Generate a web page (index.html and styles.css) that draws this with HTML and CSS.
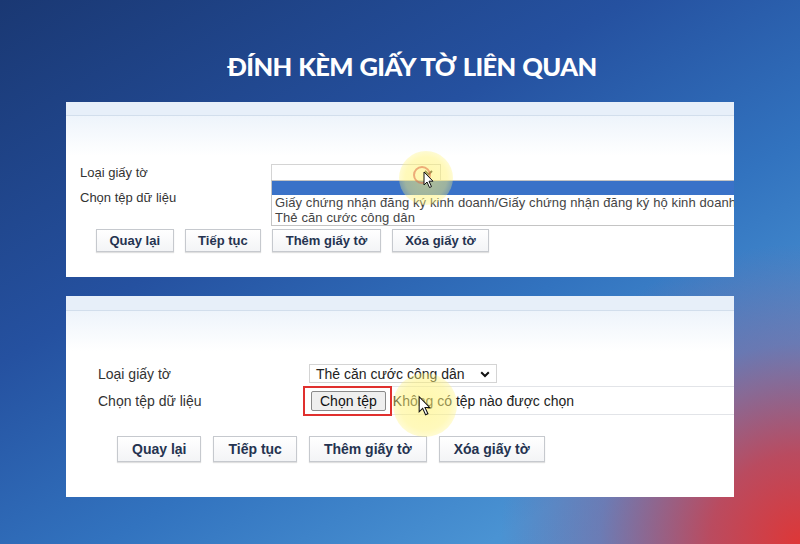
FILE: index.html
```html
<!DOCTYPE html>
<html lang="vi">
<head>
    <meta charset="UTF-8">
    <meta name="viewport" content="width=device-width, initial-scale=1.0">
    <title>Đính kèm giấy tờ liên quan</title>
    <link rel="stylesheet" href="styles.css">
</head>
<body>
    <h1 class="title">ĐÍNH KÈM GIẤY TỜ LIÊN QUAN</h1>

    <div class="shots">
        <!-- step 1: dropdown opened -->
        <div class="panel panel-sm">
            <div class="band"></div>
            <div class="form">
                <div class="form-row">
                    <span class="label">Loại giấy tờ</span>
                    <div class="select select-empty">
                        <svg class="chevron" width="9" height="6" viewBox="0 0 9 6"><path d="M1 1 L4.5 4.5 L8 1" fill="none" stroke="#222" stroke-width="1.8"/></svg>
                        <div class="dropdown">
                            <div class="option option-active"></div>
                            <div class="option">Giấy chứng nhận đăng ký kinh doanh/Giấy chứng nhận đăng ký hộ kinh doanh</div>
                            <div class="option">Thẻ căn cước công dân</div>
                        </div>
                    </div>
                </div>
                <div class="form-row">
                    <span class="label">Chọn tệp dữ liệu</span>
                    <span></span>
                </div>
                <div class="actions">
                    <button>Quay lại</button>
                    <button>Tiếp tục</button>
                    <button>Thêm giấy tờ</button>
                    <button>Xóa giấy tờ</button>
                </div>
            </div>
            <div class="glow glow-1"></div>
            <div class="click-ring"></div>
            <svg class="cursor cursor-1" width="12" height="18" viewBox="0 0 12 18"><path d="M1 1 L1 14 L4 11 L6.5 16.5 L8.5 15.6 L6 10.2 L10 10.2 Z" fill="#fff" stroke="#111" stroke-width="1"/></svg>
        </div>

        <!-- step 2: file chooser -->
        <div class="panel panel-lg">
            <div class="band"></div>
            <div class="form">
                <div class="form-row">
                    <span class="label">Loại giấy tờ</span>
                    <div class="select">
                        <span>Thẻ căn cước công dân</span>
                        <svg class="chevron" width="10" height="7" viewBox="0 0 10 7"><path d="M1.2 1.2 L5 5 L8.8 1.2" fill="none" stroke="#111" stroke-width="2"/></svg>
                    </div>
                </div>
                <div class="form-row">
                    <span class="label">Chọn tệp dữ liệu</span>
                    <div class="file-cell">
                        <span class="highlight"><span class="file-btn">Chọn tệp</span></span>
                        <span class="file-name">Không có tệp nào được chọn</span>
                    </div>
                </div>
                <div class="actions">
                    <button>Quay lại</button>
                    <button>Tiếp tục</button>
                    <button>Thêm giấy tờ</button>
                    <button>Xóa giấy tờ</button>
                </div>
            </div>
            <div class="glow glow-2"></div>
            <svg class="cursor cursor-2" width="14" height="22" viewBox="0 0 12 18"><path d="M1 1 L1 14 L4 11 L6.5 16.5 L8.5 15.6 L6 10.2 L10 10.2 Z" fill="#fff" stroke="#111" stroke-width="0.9"/></svg>
        </div>
    </div>
</body>
</html>
```

FILE: styles.css
```css
body { margin: 0; width: 800px; height: 544px; overflow: hidden; font-family: "Liberation Sans", Arial, sans-serif; background: radial-gradient(circle at 100% 100%, rgba(222, 55, 55, 1) 0, rgba(205, 62, 75, 0.85) 90px, rgba(140, 100, 150, 0.5) 200px, rgba(100, 130, 190, 0) 300px), linear-gradient(150deg, #1a3873 0%, #2551a0 36%, #3273bf 60%, #4a93d3 82%, #4d96d5 100%); }
.title { margin: 0; padding: 51px 0 0 24px; height: 30px; line-height: 30px; text-align: center; color: #fff; font-family: Lato, "Noto Sans", sans-serif; font-weight: 900; font-size: 25.5px; letter-spacing: -0.6px; word-spacing: 1px; }
.shots { display: flex; flex-direction: column; gap: 19px; padding: 21px 66px 0; }
.panel { position: relative; overflow: hidden; background: #fff; }
.panel-sm { height: 175px; }
.panel-lg { height: 201px; }
.band { height: 13px; background: #e7eff9; border-bottom: 1px solid #d2deec; }
.panel-lg .band { height: 14px; }
.form { background: linear-gradient(#eef4fb, #fff 40px); }
.form-row { display: grid; align-items: center; }
.label { color: #333; }

/* small panel: 13px */
.panel-sm .form { padding: 48px 0 0 14px; font-size: 13px; }
.panel-sm .form-row { grid-template-columns: 191px 1fr; height: 17px; }
.panel-sm .form-row + .form-row { margin-top: 8px; }
.panel-sm .select { width: 170px; height: 17px; }
.panel-sm .actions { margin: 23px 0 0 16px; gap: 11px; }
.panel-sm button { height: 23px; padding: 0 12.5px; font-size: 13px; }

/* large panel: 14px */
.panel-lg .form { padding: 53px 0 0 32px; font-size: 14px; }
.panel-lg .form-row { grid-template-columns: 205px 1fr; }
.panel-lg .form-row:first-child { height: 19px; }
.panel-lg .form-row + .form-row { margin-top: 3px; }
.panel-lg .select { width: 188px; height: 19px; margin-left: 6px; padding-left: 6px; }
.panel-lg .actions { margin: 21px 0 0 19px; gap: 12px; }
.panel-lg button { height: 26px; padding: 0 14px; font-size: 14px; }

.select { position: relative; box-sizing: border-box; display: flex; align-items: center; border: 1px solid #d4d4d4; background: #fff; color: #222; }
.select .chevron { position: absolute; right: 6px; top: 50%; margin-top: -3px; }
.panel-sm .select .chevron { right: 7px; }
.dropdown { position: absolute; top: 100%; left: -1px; width: 480px; height: 46px; box-sizing: border-box; border: 1px solid #c4c4c4; border-right: none; background: #fff; line-height: 14px; color: #444; letter-spacing: 0.1px; }
.option { height: 14px; padding: 1px 0 0 3px; white-space: nowrap; }
.option-active { height: 14px; padding: 0; background: #3a72c8; }

.actions { display: flex; }
button { box-sizing: border-box; font-family: "Liberation Sans", Arial, sans-serif; font-weight: bold; color: #253350; background: linear-gradient(#ffffff, #f3f4f6); border: 1px solid #c6c9ce; border-radius: 0; box-shadow: 0 1px 1px rgba(0, 0, 0, 0.12); }

.file-cell { display: flex; align-items: center; height: 29px; box-sizing: border-box; border-top: 1px solid #e2e4e8; border-bottom: 1px solid #e2e4e8; }
.highlight { box-sizing: border-box; height: 30px; display: flex; align-items: center; padding: 0 4px 0 6px; border: 2px solid #e0302e; }
.file-btn { box-sizing: border-box; height: 20px; line-height: 18px; padding: 0 8px; background: #efefef; border: 1px solid #8a8a8a; border-radius: 2px; color: #111; }
.file-name { margin-left: 1px; color: #222; }

.glow { position: absolute; border-radius: 50%; background: radial-gradient(circle, rgba(255, 243, 120, 0.6) 0%, rgba(255, 243, 120, 0.5) 55%, rgba(255, 243, 120, 0) 100%); }
.glow-1 { left: 333px; top: 49px; width: 54px; height: 54px; }
.glow-2 { left: 327px; top: 77px; width: 64px; height: 64px; }
.click-ring { position: absolute; left: 347px; top: 64px; width: 14px; height: 14px; border-radius: 50%; border: 2px solid rgba(222, 110, 70, 0.55); }
.cursor { position: absolute; }
.cursor-1 { left: 357px; top: 69px; }
.cursor-2 { left: 352px; top: 99px; }
```
